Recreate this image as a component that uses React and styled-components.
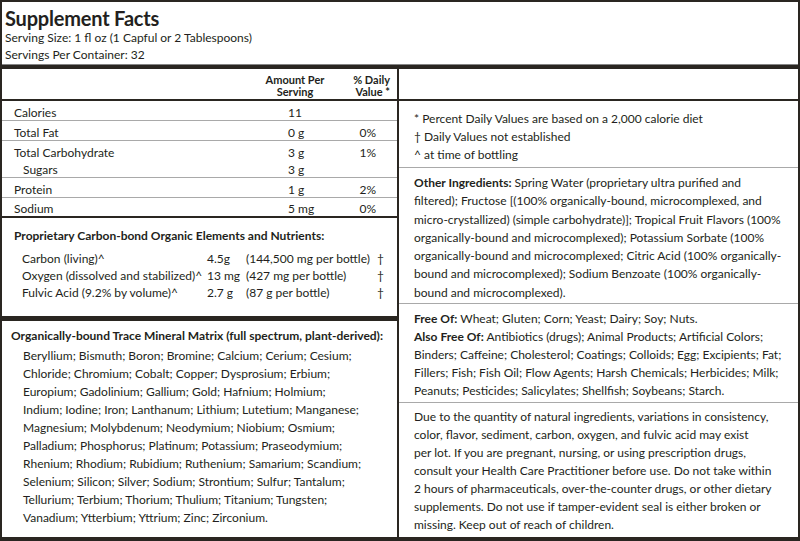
import styled, { createGlobalStyle } from "styled-components";

const GlobalStyle = createGlobalStyle`
  html, body {
    margin: 0;
    padding: 0;
    background: #ffffff;
  }
  body {
    font-family: Lato, "Open Sans", sans-serif;
    color: #231f20;
  }
`;

const INK = "#2a2621";
const RULE = "#a9a9a9";

const Label = styled.div`
  width: 800px;
  height: 541px;
  box-sizing: border-box;
  border: 2px solid ${INK};
  border-bottom-width: 4px;
  display: flex;
  flex-direction: column;
  font-size: 12px;
  overflow: hidden;
`;

const Header = styled.header`
  height: 63px;
  box-sizing: border-box;
  padding: 5px 0 0 3px;
  border-bottom: 1px solid #858585;
`;

const Title = styled.h1`
  margin: 0;
  font-size: 20px;
  line-height: 22px;
  font-weight: 700;
  letter-spacing: -0.2px;
`;

const ServingLine = styled.div`
  line-height: 17px;
  white-space: nowrap;
`;

const Band = styled.div`
  height: ${(p) => p.$size}px;
  background: ${INK};
  flex-shrink: 0;
`;

const Columns = styled.div`
  display: grid;
  grid-template-columns: 397px 1fr;
  flex: ${(p) => (p.$grow ? 1 : "none")};
  min-height: 0;
  border-bottom: ${(p) => (p.$ruled ? `2px solid ${INK}` : "none")};
`;

const Column = styled.div`
  display: flex;
  flex-direction: column;
  min-height: 0;
  border-right: ${(p) => (p.$divided ? `2px solid ${INK}` : "none")};
`;

const HeadRow = styled.div`
  height: 30px;
  box-sizing: border-box;
  padding: 5px 0 0;
  display: grid;
  grid-template-columns: 1fr 70px 62px;
  column-gap: 5px;
`;

const HeadCell = styled.div`
  font-size: 11px;
  font-weight: 700;
  line-height: 12px;
  text-align: ${(p) => (p.$right ? "right" : "center")};
  padding-right: ${(p) => (p.$right ? "7px" : "0")};
`;

const NutrientTable = styled.div`
  border-bottom: 2px solid ${INK};
`;

const NutrientRow = styled.div`
  display: grid;
  grid-template-columns: 274px 60px 28px;
  padding: ${(p) => (p.$last ? 3 : 4)}px 0 0 12px;
  line-height: 15px;
  border-bottom: ${(p) => (p.$last ? "none" : `1px solid ${RULE}`)};
`;

const NutrientName = styled.div`
  padding-left: ${(p) => (p.$sub ? "9px" : "0")};
  margin-top: ${(p) => (p.$sub ? "2px" : "0")};
`;

const Amount = styled.div`
  margin-top: ${(p) => (p.$sub ? "2px" : "0")};
`;

const Percent = styled.div`
  text-align: right;
`;

const PropSection = styled.section`
  padding: 9px 0 15px 12px;
  border-bottom: 5px solid ${INK};
`;

const SectionTitle = styled.div`
  font-weight: 700;
  line-height: 18px;
  white-space: nowrap;
`;

const PropRows = styled.div`
  margin-top: 5px;
  padding-left: 8px;
`;

const PropRow = styled.div`
  display: grid;
  grid-template-columns: 185px 39px 131px 10px;
  line-height: 17px;
  white-space: nowrap;
`;

const MineralSection = styled.section`
  flex: 1;
  padding: 6px 0 0 9px;
`;

const Lines = styled.div`
  margin-top: ${(p) => p.$gap || 0}px;
  padding-left: ${(p) => p.$indent || 0}px;
  line-height: ${(p) => p.$lead || 18}px;
  white-space: nowrap;
`;

const Block = styled.section`
  padding: ${(p) => p.$top}px 0 ${(p) => p.$bottom}px 15px;
  border-bottom: ${(p) => (p.$ruled ? `1px solid ${RULE}` : "none")};
  flex: ${(p) => (p.$grow ? 1 : "none")};
  line-height: ${(p) => p.$lead || 18}px;
  white-space: nowrap;
`;

const Strong = styled.b`
  font-weight: 700;
`;

const nutrients = [
  { name: "Calories", amount: "11", dv: "" },
  { name: "Total Fat", amount: "0 g", dv: "0%" },
  { name: "Total Carbohydrate", amount: "3 g", dv: "1%", sub: { name: "Sugars", amount: "3 g" } },
  { name: "Protein", amount: "1 g", dv: "2%" },
  { name: "Sodium", amount: "5 mg", dv: "0%" },
];

const proprietary = [
  ["Carbon (living)^", "4.5g", "(144,500 mg per bottle)"],
  ["Oxygen (dissolved and stabilized)^", "13 mg", "(427 mg per bottle)"],
  ["Fulvic Acid (9.2% by volume)^", "2.7 g", "(87 g per bottle)"],
];

const minerals = [
  "Beryllium; Bismuth; Boron; Bromine; Calcium; Cerium; Cesium;",
  "Chloride; Chromium; Cobalt; Copper; Dysprosium; Erbium;",
  "Europium; Gadolinium; Gallium; Gold; Hafnium; Holmium;",
  "Indium; Iodine; Iron; Lanthanum; Lithium; Lutetium; Manganese;",
  "Magnesium; Molybdenum; Neodymium; Niobium; Osmium;",
  "Palladium; Phosphorus; Platinum; Potassium; Praseodymium;",
  "Rhenium; Rhodium; Rubidium; Ruthenium; Samarium; Scandium;",
  "Selenium; Silicon; Silver; Sodium; Strontium; Sulfur; Tantalum;",
  "Tellurium; Terbium; Thorium; Thulium; Titanium; Tungsten;",
  "Vanadium; Ytterbium; Yttrium; Zinc; Zirconium.",
];

const notes = [
  "* Percent Daily Values are based on a 2,000 calorie diet",
  "† Daily Values not established",
  "^ at time of bottling",
];

const ingredients = [
  "filtered); Fructose [(100% organically-bound, microcomplexed, and",
  "micro-crystallized) (simple carbohydrate)]; Tropical Fruit Flavors (100%",
  "organically-bound and microcomplexed); Potassium Sorbate (100%",
  "organically-bound and microcomplexed; Citric Acid (100% organically-",
  "bound and microcomplexed); Sodium Benzoate (100% organically-",
  "bound and microcomplexed).",
];

const alsoFree = [
  "Binders; Caffeine; Cholesterol; Coatings; Colloids; Egg; Excipients; Fat;",
  "Fillers; Fish; Fish Oil; Flow Agents; Harsh Chemicals; Herbicides; Milk;",
  "Peanuts; Pesticides; Salicylates; Shellfish; Soybeans; Starch.",
];

const warning = [
  "Due to the quantity of natural ingredients, variations in consistency,",
  "color, flavor, sediment, carbon, oxygen, and fulvic acid may exist",
  "per lot. If you are pregnant, nursing, or using prescription drugs,",
  "consult your Health Care Practitioner before use. Do not take within",
  "2 hours of pharmaceuticals, over-the-counter drugs, or other dietary",
  "supplements. Do not use if tamper-evident seal is either broken or",
  "missing. Keep out of reach of children.",
];

export default function App() {
  return (
    <>
      <GlobalStyle />
      <Label>
        <Header>
          <Title>Supplement Facts</Title>
          <ServingLine>Serving Size: 1 fl oz (1 Capful or 2 Tablespoons)</ServingLine>
          <ServingLine>Servings Per Container: 32</ServingLine>
        </Header>
        <Band $size={4} />

        <Columns $ruled>
          <Column $divided>
            <HeadRow>
              <div />
              <HeadCell>
                Amount Per
                <br />
                Serving
              </HeadCell>
              <HeadCell $right>
                % Daily
                <br />
                Value *
              </HeadCell>
            </HeadRow>
          </Column>
          <Column />
        </Columns>

        <Columns $grow>
          <Column $divided>
            <NutrientTable>
              {nutrients.map((n, i) => (
                <NutrientRow key={n.name} $last={i === nutrients.length - 1}>
                  <NutrientName>{n.name}</NutrientName>
                  <Amount>{n.amount}</Amount>
                  <Percent>{n.dv}</Percent>
                  {n.sub && (
                    <>
                      <NutrientName $sub>{n.sub.name}</NutrientName>
                      <Amount $sub>{n.sub.amount}</Amount>
                      <Percent />
                    </>
                  )}
                </NutrientRow>
              ))}
            </NutrientTable>

            <PropSection>
              <SectionTitle>Proprietary Carbon-bond Organic Elements and Nutrients:</SectionTitle>
              <PropRows>
                {proprietary.map(([name, amount, bottle]) => (
                  <PropRow key={name}>
                    <span>{name}</span>
                    <span>{amount}</span>
                    <span>{bottle}</span>
                    <span>†</span>
                  </PropRow>
                ))}
              </PropRows>
            </PropSection>

            <MineralSection>
              <SectionTitle>Organically-bound Trace Mineral Matrix (full spectrum, plant-derived):</SectionTitle>
              <Lines $gap={2} $indent={12}>
                {minerals.map((line) => (
                  <div key={line}>{line}</div>
                ))}
              </Lines>
            </MineralSection>
          </Column>

          <Column>
            <Block $top={9} $bottom={3} $ruled>
              {notes.map((line) => (
                <div key={line}>{line}</div>
              ))}
            </Block>
            <Block $top={6} $bottom={1} $lead={18.3} $ruled>
              <div>
                <Strong>Other Ingredients:</Strong> Spring Water (proprietary ultra purified and
              </div>
              {ingredients.map((line) => (
                <div key={line}>{line}</div>
              ))}
            </Block>
            <Block $top={6} $bottom={2} $ruled>
              <div>
                <Strong>Free Of:</Strong> Wheat; Gluten; Corn; Yeast; Dairy; Soy; Nuts.
              </div>
              <div>
                <Strong>Also Free Of:</Strong> Antibiotics (drugs); Animal Products; Artificial Colors;
              </div>
              {alsoFree.map((line) => (
                <div key={line}>{line}</div>
              ))}
            </Block>
            <Block $top={5} $bottom={0} $grow>
              {warning.map((line) => (
                <div key={line}>{line}</div>
              ))}
            </Block>
          </Column>
        </Columns>
      </Label>
    </>
  );
}
